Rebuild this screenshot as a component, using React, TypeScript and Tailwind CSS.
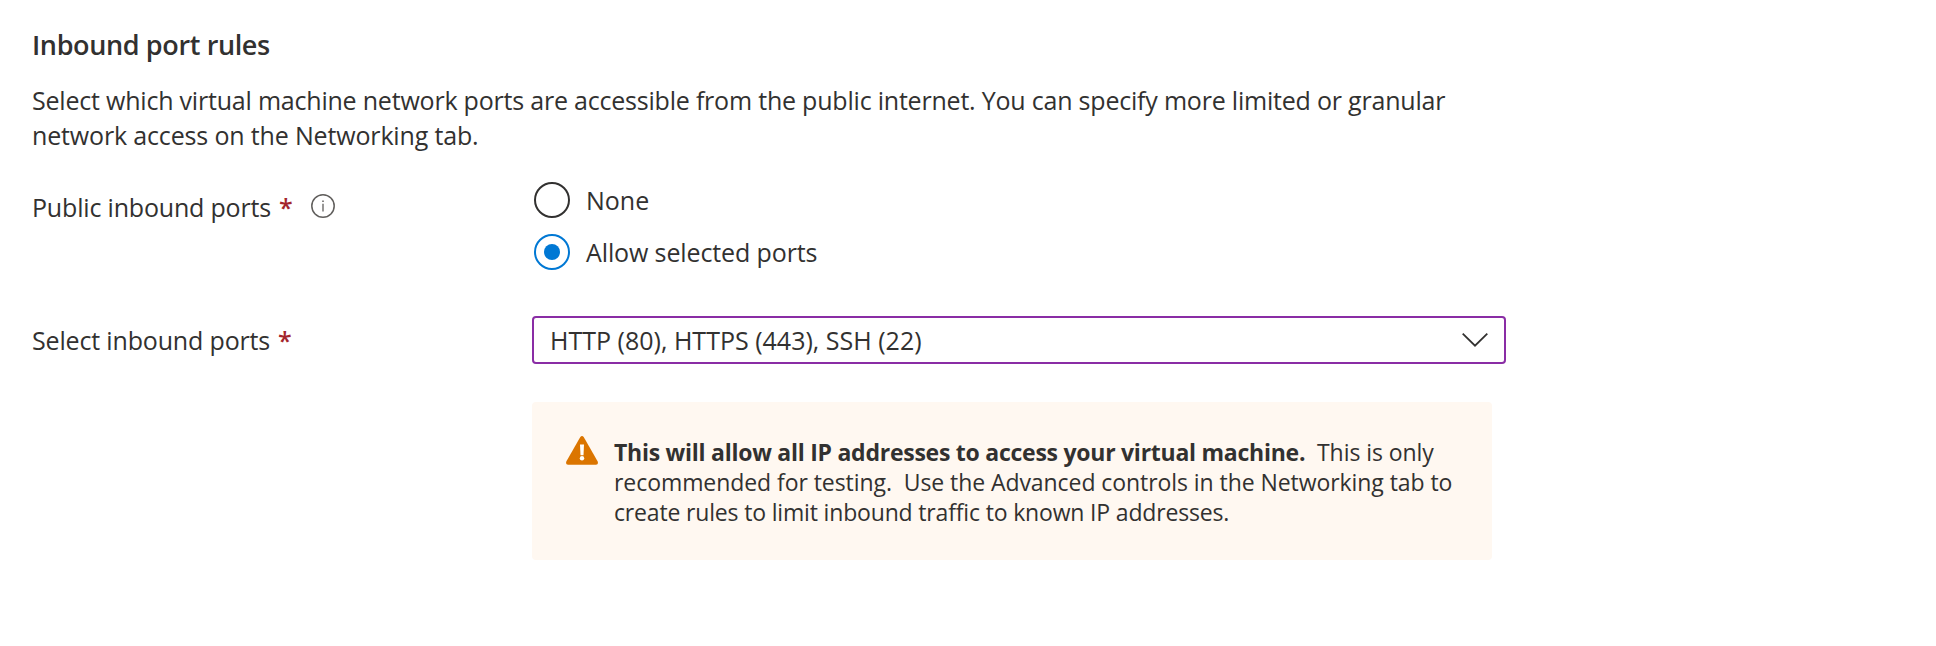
import type { ReactNode } from "react";

function InfoIcon() {
  return (
    <svg viewBox="0 0 24 24" className="h-6 w-6" fill="none" stroke="#605e5c" aria-hidden="true">
      <circle cx="12" cy="12" r="11.2" strokeWidth="1.5" />
      <path d="M12 9.8V17.4" strokeWidth="1.3" />
      <path d="M12 6.4V8" strokeWidth="1.5" />
    </svg>
  );
}

function WarningIcon() {
  return (
    <svg viewBox="0 0 32 29" className="h-[29px] w-8 shrink-0" aria-hidden="true">
      <path
        d="M14.3 1.1Q16-1 17.7 1.1L31.7 25.6Q32.6 28.6 30 28.8H2Q-.6 28.6.3 25.6Z"
        fill="#db7500"
      />
      <path d="M14 8.5H18L17.5 19.3H14.5Z" fill="#fff" />
      <circle cx="16" cy="22.2" r="2.2" fill="#fff" />
    </svg>
  );
}

function Required() {
  return <span className="ml-2 w-[14px] text-[25px] leading-9 font-semibold text-[#a4262c]">*</span>;
}

function Radio({ checked, children }: { checked?: boolean; children: ReactNode }) {
  return (
    <label className="flex h-9 items-center gap-4">
      <span
        className={
          checked
            ? "flex h-9 w-9 items-center justify-center rounded-full border-2 border-[#0078d4]"
            : "flex h-9 w-9 items-center justify-center rounded-full border-2 border-[#323130]"
        }
      >
        {checked && <span className="h-4 w-4 rounded-full bg-[#0078d4]" />}
      </span>
      {children}
    </label>
  );
}

export default function App() {
  return (
    <main className="h-[646px] overflow-hidden bg-white pt-[26px] pl-8 font-['Open_Sans',sans-serif] text-[25px] leading-9 tracking-[-0.16px] whitespace-nowrap text-[#323130]">
      <h2 className="text-[27px] leading-[37px] font-semibold tracking-[-0.37px]">Inbound port rules</h2>
      <p className="mt-5 leading-[35px] tracking-[-0.208px]">
        Select which virtual machine network ports are accessible from the public internet. You can specify more
        limited or granular
        <br />
        <span className="tracking-[-0.157px]">network access on the Networking tab.</span>
      </p>

      <div className="mt-[29px] flex items-start">
        <div className="mt-[7px] flex h-9 w-[502px] items-start">
          <span className="w-[239px] tracking-[-0.18px]">Public inbound ports</span>
          <Required />
          <span className="mt-[5px] ml-[18px]">
            <InfoIcon />
          </span>
        </div>
        <div className="flex flex-col gap-4">
          <Radio>
            <span className="tracking-normal">None</span>
          </Radio>
          <Radio checked>
            <span className="tracking-[-0.12px]">Allow selected ports</span>
          </Radio>
        </div>
      </div>

      <div className="mt-[46px] flex items-center">
        <div className="flex w-[500px] items-center">
          <span className="w-[238px]">Select inbound ports</span>
          <Required />
        </div>
        <button className="flex h-12 w-[974px] items-center justify-between rounded border-2 border-[#8a2da5] pr-4 pl-4">
          <span className="tracking-[0.01px]">HTTP (80), HTTPS (443), SSH (22)</span>
          <svg viewBox="0 0 26 14" className="h-3.5 w-[26px]" fill="none" stroke="#323130" aria-hidden="true">
            <path d="M.7.7L13 12.7L25.3.7" strokeWidth="1.8" />
          </svg>
        </button>
      </div>

      <div className="mt-[38px] ml-[500px] flex h-[158px] w-[960px] items-start rounded bg-[#fff8f1] pt-[34px] pl-[34px]">
        <WarningIcon />
        <p className="mt-px ml-4 text-[23px] leading-[30px]">
          <b className="tracking-[-0.255px]">This will allow all IP addresses to access your virtual machine.</b>
          <span className="tracking-[-0.07px]">&nbsp; This is only</span>
          <br />
          <span className="tracking-[-0.067px]">
            recommended for testing.&nbsp; Use the Advanced controls in the Networking tab to
          </span>
          <br />
          <span className="tracking-[-0.167px]">create rules to limit inbound traffic to known IP addresses.</span>
        </p>
      </div>
    </main>
  );
}
